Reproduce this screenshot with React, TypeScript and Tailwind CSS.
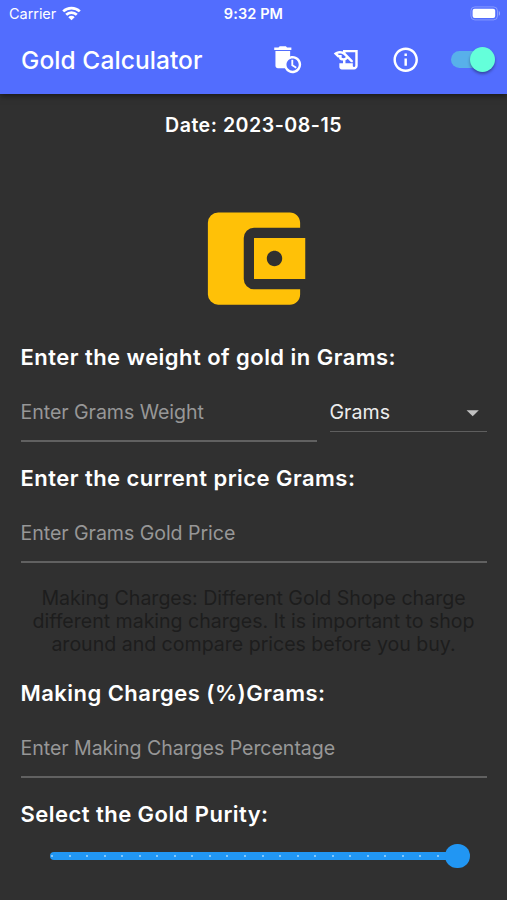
import React from 'react';
import { MdAccountBalanceWallet, MdArrowDropDown, MdAutoDelete, MdHistoryEdu, MdInfoOutline } from 'react-icons/md';

const KARATS = 23;

function StatusBar() {
  return (
    <div className="grid h-[27px] grid-cols-3 items-center pl-[8px] pr-[8px] text-[14.5px]">
      <div className="flex items-center gap-[6px] pl-px">
        <span className="tracking-[-0.05px]">Carrier</span>
        <svg width="19" height="15" viewBox="0 0 19 15" fill="none" stroke="white" strokeWidth="2.7">
          <path d="M1.2 5.4a12 12 0 0 1 16.6 0" />
          <path d="M4.2 8.8a7.6 7.6 0 0 1 10.6 0" />
          <path d="M9.5 14.2 6.3 11.2a4.5 4.5 0 0 1 6.4 0z" fill="white" stroke="none" />
        </svg>
      </div>
      <div className="text-center font-semibold tracking-[0.1px]">9:32 PM</div>
      <svg className="-mr-[2px] justify-self-end" width="31" height="15" viewBox="0 0 31 15">
        <rect x="0.9" y="0.9" width="26.6" height="13" rx="4" fill="none" stroke="white" strokeOpacity="0.3" />
        <rect x="2.6" y="2.8" width="22.6" height="9.2" rx="2" fill="white" />
        <path d="M28.8 5c1.6.6 1.6 4.2 0 4.8z" fill="white" fillOpacity="0.4" />
      </svg>
    </div>
  );
}

function Switch() {
  return (
    <div className="relative flex h-[25px] w-[44.5px] items-center">
      <div className="h-[17px] w-[41px] rounded-full bg-[#58b0ea]" />
      <div className="absolute right-0 top-0 size-[25px] rounded-full bg-[#64ffda] shadow-[0_2px_3px_rgba(0,0,0,0.35)]" />
    </div>
  );
}

function Label({ children }: { children: React.ReactNode }) {
  return <h2 className="h-[30px] text-[22px] font-semibold leading-[30px] tracking-[0.46px] whitespace-nowrap">{children}</h2>;
}

function Field({ hint }: { hint: string }) {
  return (
    <div className="mt-[12px] h-[58px] flex-1 border-b-2 border-[#616161] pt-[14px] text-[19.6px] leading-[28px] tracking-[-0.06px] whitespace-nowrap text-[#979797]">
      {hint}
    </div>
  );
}

export default function App() {
  return (
    <div className="h-[900px] w-[507px] overflow-hidden bg-[#303030] font-['Inter',sans-serif] text-white">
      {/* App bar */}
      <header className="relative h-[94px] bg-[#526dfe] shadow-[0_2px_6px_rgba(0,0,0,0.5)]">
        <StatusBar />
        <div className="flex h-[65px] items-center pl-[21px] pr-[12px]">
          <h1 className="w-[252px] pt-px text-[24.5px] font-medium tracking-[0.08px] whitespace-nowrap">Gold Calculator</h1>
          <MdAutoDelete className="size-[29.4px]" />
          <MdHistoryEdu className="ml-[29.4px] size-[29.4px]" />
          <MdInfoOutline className="ml-[29.4px] size-[29.4px]" />
          <div className="ml-auto">
            <Switch />
          </div>
        </div>
      </header>

      <main className="px-[20.5px]">
        <div className="pt-[17px] text-center text-[19.6px] font-semibold leading-[28px] tracking-[0.5px]">Date: 2023-08-15</div>
        <MdAccountBalanceWallet className="mx-auto mt-[58px] size-[123px] translate-x-[0.5px] text-[#ffc107]" />

        <div className="mt-[22px]">
          <Label>Enter the weight of gold in Grams:</Label>
          <div className="flex">
            <Field hint="Enter Grams Weight" />
            <div className="ml-[12.5px] mt-[12px] flex h-[47.5px] w-[157px] items-center justify-between border-b border-[#5e5e5e] pt-[10px] text-[19.6px] text-[#ececec]">
              <span>Grams</span>
              <MdArrowDropDown className="-mr-px size-[29.4px] text-[#c1c1c1]" />
            </div>
          </div>
        </div>

        <div className="mt-[21px]">
          <Label>Enter the current price Grams:</Label>
          <Field hint="Enter Grams Gold Price" />
        </div>

        <p className="mt-[23.5px] text-center text-[19.6px] leading-[23.3px] tracking-[-0.03px] whitespace-nowrap text-[#1d1d1d]">
          Making Charges: Different Gold Shope charge
          <br />
          different making charges. It is important to shop
          <br />
          around and compare prices before you buy.
        </p>

        <div className="mt-[21.6px]">
          <Label>Making Charges (%)Grams:</Label>
          <Field hint="Enter Making Charges Percentage" />
        </div>

        <div className="mt-[21px]">
          <Label>Select the Gold Purity:</Label>
        </div>

        {/* Purity slider */}
        <div className="relative ml-[29px] mt-[15px] flex h-[25px] w-[420px] items-center">
          <div className="flex h-[8px] w-[408px] items-center gap-[15.55px] rounded-full bg-[#2196f3] pl-[1.5px]">
            {Array.from({ length: KARATS }, (_, i) => (
              <span key={i} className="size-[2px] shrink-0 rounded-full bg-[#a5d6fb]" />
            ))}
          </div>
          <div className="absolute right-0 top-0 size-[24.5px] rounded-full bg-[#2196f3]" />
        </div>
      </main>
    </div>
  );
}
